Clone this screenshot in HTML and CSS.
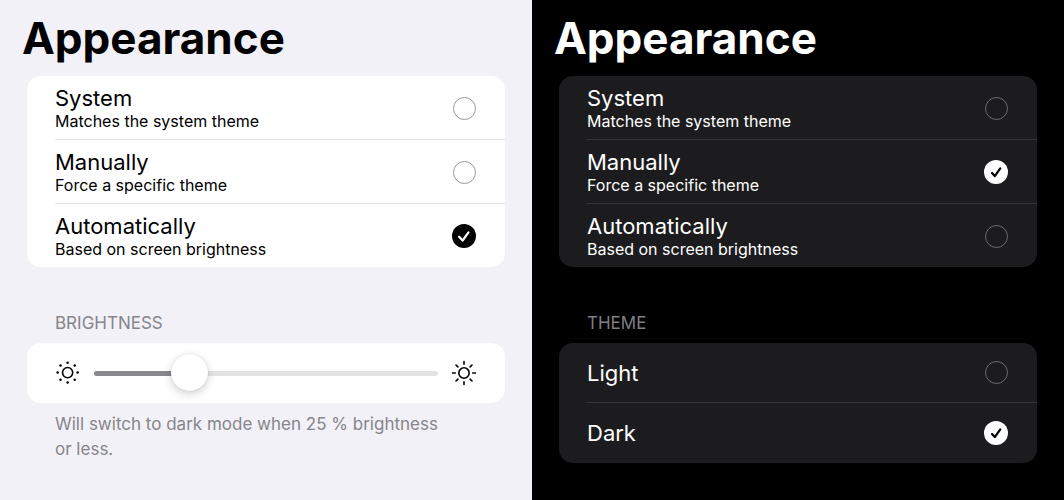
FILE: index.html
```
<!DOCTYPE html>
<html lang="en">
<head>
<meta charset="utf-8">
<title>Appearance</title>
<link rel="stylesheet" href="styles.css">
</head>
<body>
<main class="screens">
  <section class="panel light">
    <h1 class="title">Appearance</h1>
    <div class="card">
      <label class="row">
        <span class="text"><span class="name">System</span><span class="detail">Matches the system theme</span></span>
        <span class="choice"><input type="radio" name="light-mode"><svg class="check" viewBox="0 0 24 24"><path d="M7.1 12.7 10.6 16.5 16.5 8.3"/></svg></span>
      </label>
      <label class="row">
        <span class="text"><span class="name">Manually</span><span class="detail">Force a specific theme</span></span>
        <span class="choice"><input type="radio" name="light-mode"><svg class="check" viewBox="0 0 24 24"><path d="M7.1 12.7 10.6 16.5 16.5 8.3"/></svg></span>
      </label>
      <label class="row">
        <span class="text"><span class="name">Automatically</span><span class="detail">Based on screen brightness</span></span>
        <span class="choice"><input type="radio" name="light-mode" checked><svg class="check" viewBox="0 0 24 24"><path d="M7.1 12.7 10.6 16.5 16.5 8.3"/></svg></span>
      </label>
    </div>
    <h2 class="heading"><label for="brightness">BRIGHTNESS</label></h2>
    <div class="card slider-card">
      <svg class="sun" viewBox="0 0 26 26" aria-hidden="true">
        <circle class="ring" cx="12.6" cy="12.6" r="5.1"/>
        <g class="dots"><circle cx="12.6" cy="2.7" r="1.25"/><circle cx="19.7" cy="5.5" r="1.25"/><circle cx="22.6" cy="12.6" r="1.25"/><circle cx="19.7" cy="19.7" r="1.25"/><circle cx="12.6" cy="22.5" r="1.25"/><circle cx="5.5" cy="19.7" r="1.25"/><circle cx="2.6" cy="12.6" r="1.25"/><circle cx="5.5" cy="5.5" r="1.25"/></g>
      </svg>
      <input class="slider" id="brightness" type="range" min="0" max="100" value="25">
      <svg class="sun" viewBox="0 0 26 26" aria-hidden="true">
        <circle class="ring" cx="13" cy="13" r="5.2"/>
        <path class="ring" d="M13 1.6V4.3M13 21.7v2.7M1.6 13h2.7M21.7 13h2.7M5 5l1.9 1.9M19.1 19.1 21 21M5 21l1.9-1.9M19.1 6.9 21 5"/>
      </svg>
    </div>
    <p class="note">Will switch to dark mode when 25 % brightness or less.</p>
  </section>
  <section class="panel dark">
    <h1 class="title">Appearance</h1>
    <div class="card">
      <label class="row">
        <span class="text"><span class="name">System</span><span class="detail">Matches the system theme</span></span>
        <span class="choice"><input type="radio" name="dark-mode"><svg class="check" viewBox="0 0 24 24"><path d="M8 13 10.8 16.1 16.3 8.4"/></svg></span>
      </label>
      <label class="row">
        <span class="text"><span class="name">Manually</span><span class="detail">Force a specific theme</span></span>
        <span class="choice"><input type="radio" name="dark-mode" checked><svg class="check" viewBox="0 0 24 24"><path d="M8 13 10.8 16.1 16.3 8.4"/></svg></span>
      </label>
      <label class="row">
        <span class="text"><span class="name">Automatically</span><span class="detail">Based on screen brightness</span></span>
        <span class="choice"><input type="radio" name="dark-mode"><svg class="check" viewBox="0 0 24 24"><path d="M8 13 10.8 16.1 16.3 8.4"/></svg></span>
      </label>
    </div>
    <h2 class="heading">THEME</h2>
    <div class="card">
      <label class="row single">
        <span class="name">Light</span>
        <span class="choice"><input type="radio" name="theme"><svg class="check" viewBox="0 0 24 24"><path d="M8 13 10.8 16.1 16.3 8.4"/></svg></span>
      </label>
      <label class="row single">
        <span class="name">Dark</span>
        <span class="choice"><input type="radio" name="theme" checked><svg class="check" viewBox="0 0 24 24"><path d="M8 13 10.8 16.1 16.3 8.4"/></svg></span>
      </label>
    </div>
  </section>
</main>
</body>
</html>
```
FILE: styles.css
```
* { box-sizing: border-box; }
body { margin: 0; font-family: Inter, "Liberation Sans", sans-serif; }
.screens { display: flex; min-height: 100vh; }
.panel { flex: 1; padding: 12px 27px; background: var(--page); color: var(--ink); }
.light {
  --page: #f2f1f7; --ink: #000; --card: #fff; --line: #e1e1e3;
  --ring: #98989b; --muted: #85858a; --mark: #fff;
}
.dark {
  --page: #000; --ink: #fff; --card: #1c1c1e; --line: #343436;
  --ring: #6c6c6f; --muted: #7f7f84; --mark: #000;
}
.title { margin: 0 -5px 12px; font-size: 44px; line-height: 52px; font-weight: 700; }
.card { overflow: hidden; border-radius: 14px; background: var(--card); }
.row {
  display: flex; align-items: center; justify-content: space-between;
  margin-left: 28px; padding: 9px 29px 8px 0;
  border-bottom: 1px solid var(--line);
}
.row:last-child { border-bottom: 0; }
.single { min-height: 60px; padding: 0 29px 0 0; }
.text { display: flex; flex-direction: column; }
.name { font-size: 22px; line-height: 26px; }
.detail { font-size: 16px; line-height: 20px; }
.choice { display: grid; place-items: center; width: 24px; height: 24px; }
.choice input, .check { grid-area: 1 / 1; }
.choice input {
  appearance: none; width: 23px; height: 23px; margin: 0;
  border: 1px solid var(--ring); border-radius: 50%;
}
.choice input:checked { width: 24px; height: 24px; border: 0; background: var(--ink); }
.check {
  width: 24px; height: 24px; visibility: hidden; pointer-events: none;
  fill: none; stroke: var(--mark); stroke-width: 2.2; stroke-linecap: round; stroke-linejoin: round;
}
.choice input:checked + .check { visibility: visible; }
.heading { margin: 45px 28px 9px; font-size: 17px; line-height: 22px; font-weight: 400; color: var(--muted); }
.slider-card { display: flex; align-items: center; gap: 13px; height: 60px; padding: 0 28px; }
.sun { flex: none; width: 26px; height: 26px; }
.ring { fill: none; stroke: var(--ink); stroke-width: 1.6; stroke-linecap: round; }
.dots { fill: var(--ink); }
.slider { flex: 1; min-width: 0; height: 38px; margin: 0; appearance: none; background: none; }
.slider::-webkit-slider-runnable-track {
  height: 5px; border-radius: 3px;
  background: linear-gradient(to right, #87878c 27%, #e3e3e4 27%);
}
.slider::-webkit-slider-thumb {
  appearance: none; width: 37px; height: 37px; margin-top: -17px; border-radius: 50%;
  background: #fff; box-shadow: 0 3px 10px rgba(0, 0, 0, .18), 0 0 2px rgba(0, 0, 0, .12);
}
.note { margin: 9px 56px 0 28px; font-size: 17px; line-height: 25px; color: var(--muted); }
```
